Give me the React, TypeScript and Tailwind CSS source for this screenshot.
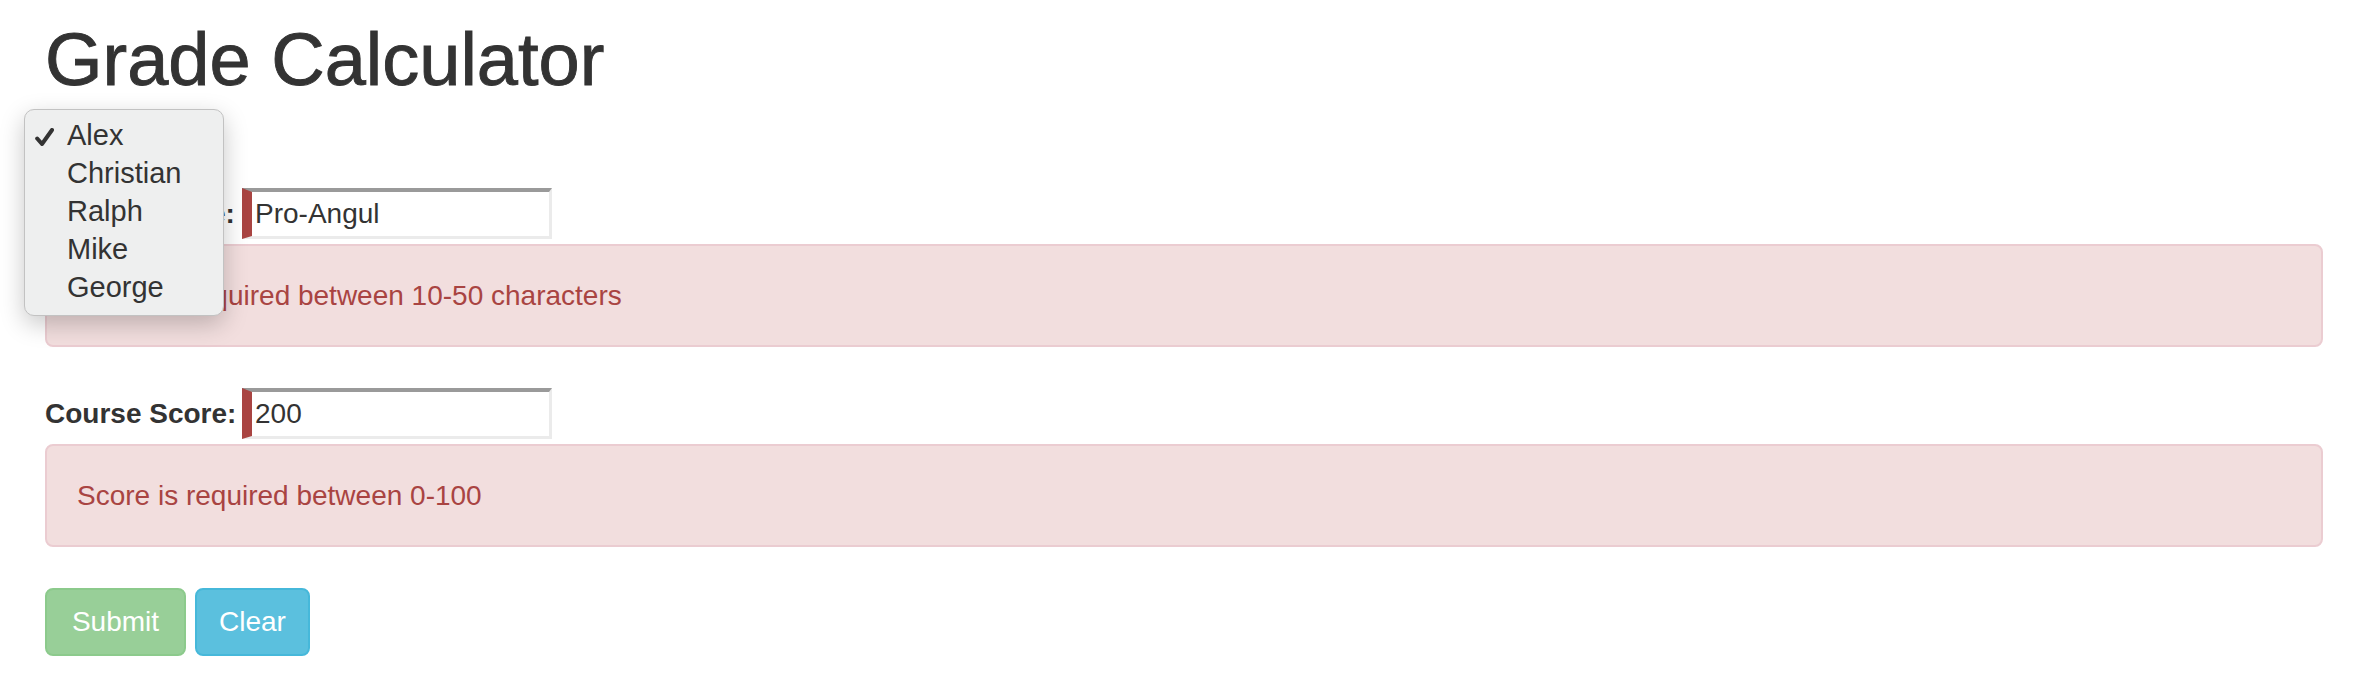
const students = ['Alex', 'Christian', 'Ralph', 'Mike', 'George'];

const Field = ({ label, value }: { label: string; value: string }) => (
	<div className="flex items-center h-[51px]">
		<label className="w-[197px] shrink-0 whitespace-nowrap font-bold text-[28px]">{label}</label>
		<input
			type="text"
			defaultValue={value}
			className="w-[310px] h-[51px] border-solid border-t-4 border-l-[10px] border-r-[3px] border-b-[3px] border-t-[#9a9a9a] border-l-[#a94442] border-r-[#ebebeb] border-b-[#ebebeb] bg-white pl-[3px] text-[28px] text-[#333] outline-none"
		/>
	</div>
);

const Alert = ({ children }: { children: string }) => (
	<div className="mt-[5px] border-2 border-solid border-[#ebccd1] bg-[#f2dede] text-[#a94442] rounded-[8px] px-[30px] py-[30px] text-[28px] leading-[39px]">
		{children}
	</div>
);

const SelectPopup = () => (
	<div className="absolute left-[24px] top-[109px] w-[200px] h-[207px] rounded-[10px] border border-solid border-[#c2c2c2] bg-[#eeefef] pt-[6px] shadow-[0_8px_24px_rgba(0,0,0,0.22)]">
		{students.map((name, i) => (
			<div key={name} className="flex items-start h-[38px] pl-[10px] text-[29px] leading-[38px] text-[#333]">
				<div className="w-[32px] shrink-0">
					{i === 0 && (
						<svg width="19" height="18" viewBox="0 0 19 18" className="mt-[12px]">
							<path d="M2.2 10.5 L7 16 L17 2" fill="none" stroke="#333" strokeWidth="4" strokeLinecap="round" strokeLinejoin="round"/>
						</svg>
					)}
				</div>
				<span>{name}</span>
			</div>
		))}
	</div>
);

export default function App() {
	return (
		<div className="relative min-h-screen bg-white text-[#333] font-['Liberation_Sans',Arial,sans-serif]">
			<div className="pl-[45px] pr-[37px] pt-[19px]">
				<h1 className="text-[74px] leading-[82px] font-medium [-webkit-text-stroke:0.9px_#333]">Grade Calculator</h1>
				<div className="mt-[87px]">
					<Field label="Course Name:" value="Pro-Angul"/>
					<Alert>Name is required between 10-50 characters</Alert>
				</div>
				<div className="mt-[41px]">
					<Field label="Course Score:" value="200"/>
					<Alert>Score is required between 0-100</Alert>
				</div>
				<div className="mt-[41px] flex gap-[9px]">
					<button disabled className="w-[141px] h-[68px] rounded-[8px] border-2 border-solid border-[#8cca8c] bg-[#98cf98] text-white text-[28px]">Submit</button>
					<button className="w-[115px] h-[68px] rounded-[8px] border-2 border-solid border-[#46b8da] bg-[#5bc0de] text-white text-[28px]">Clear</button>
				</div>
			</div>
			<SelectPopup/>
		</div>
	);
}
